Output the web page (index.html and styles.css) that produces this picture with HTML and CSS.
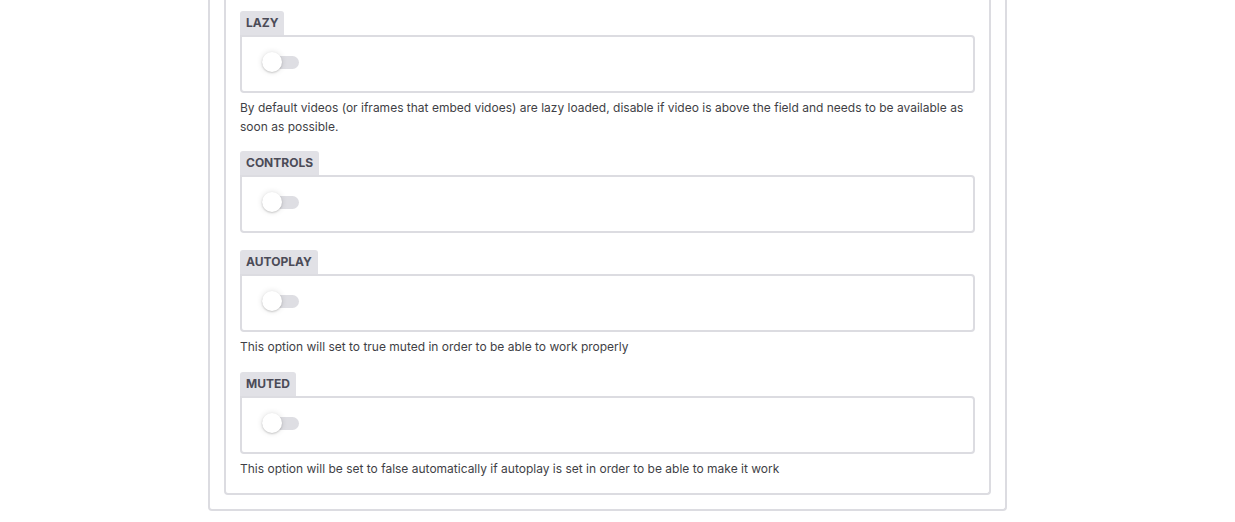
FILE: index.html
```html
<!DOCTYPE html>
<html>
<head>
<meta charset="utf-8">
<link rel="stylesheet" href="styles.css">
</head>
<body>
<div class="outer">
  <div class="inner">
    <div class="item">
      <div class="tab">LAZY</div>
      <div class="field"><span class="toggle"><span class="knob"></span></span></div>
      <p class="desc">By default videos (or iframes that embed vidoes) are lazy loaded, disable if video is above the field and needs to be available as soon as possible.</p>
    </div>
    <div class="item nodesc">
      <div class="tab">CONTROLS</div>
      <div class="field"><span class="toggle"><span class="knob"></span></span></div>
    </div>
    <div class="item">
      <div class="tab">AUTOPLAY</div>
      <div class="field"><span class="toggle"><span class="knob"></span></span></div>
      <p class="desc lastgap">This option will set to true muted in order to be able to work properly</p>
    </div>
    <div class="item">
      <div class="tab">MUTED</div>
      <div class="field"><span class="toggle"><span class="knob"></span></span></div>
      <p class="desc">This option will be set to false automatically if autoplay is set in order to be able to make it work</p>
    </div>
  </div>
</div>
</body>
</html>
```
FILE: styles.css
```css
html, body {
  margin: 0;
  padding: 0;
  background: #ffffff;
  font-family: Inter, "Noto Sans", sans-serif;
  color: #3f3f46;
  overflow: hidden;
}
.outer {
  box-sizing: border-box;
  width: 799px;
  margin: -40px 0 0 208px;
  padding: 0 14px 14px;
  border: 2px solid #dcdce1;
  border-top: none;
  border-radius: 0 0 4px 4px;
}
.inner {
  box-sizing: border-box;
  border: 2px solid #dcdce1;
  border-top: none;
  border-radius: 0 0 4px 4px;
  padding: 51px 14px 15px;
  display: flex;
  flex-direction: column;
  gap: 15px;
}
.item {
  display: flex;
  flex-direction: column;
  align-items: flex-start;
}
.item.nodesc {
  padding-bottom: 2px;
}
.tab {
  height: 24px;
  line-height: 24px;
  padding: 0 6px;
  background: #e1e1e6;
  border-radius: 3px 3px 0 0;
  font-size: 12px;
  font-weight: 700;
  color: #4b4b57;
}
.field {
  box-sizing: border-box;
  align-self: stretch;
  height: 58px;
  border: 2px solid #dcdce1;
  border-radius: 0 4px 4px 4px;
  padding: 15px 20px 19px;
}
.toggle {
  position: relative;
  display: block;
  width: 37px;
  height: 20px;
}
.toggle::before {
  content: "";
  position: absolute;
  left: 0;
  top: 4px;
  width: 37px;
  height: 13px;
  border-radius: 7px;
  background: #dedee3;
}
.knob {
  position: absolute;
  left: 0;
  top: 0;
  width: 20px;
  height: 20px;
  border-radius: 50%;
  background: #ffffff;
  box-shadow: 0 0 6px rgba(0, 0, 0, 0.12), 0 1px 2px rgba(0, 0, 0, 0.18);
}
.desc {
  margin: 5px 0 0;
  font-size: 12px;
  line-height: 19px;
  color: #3f3f46;
}
.desc.lastgap {
  margin-bottom: 1px;
}
```
